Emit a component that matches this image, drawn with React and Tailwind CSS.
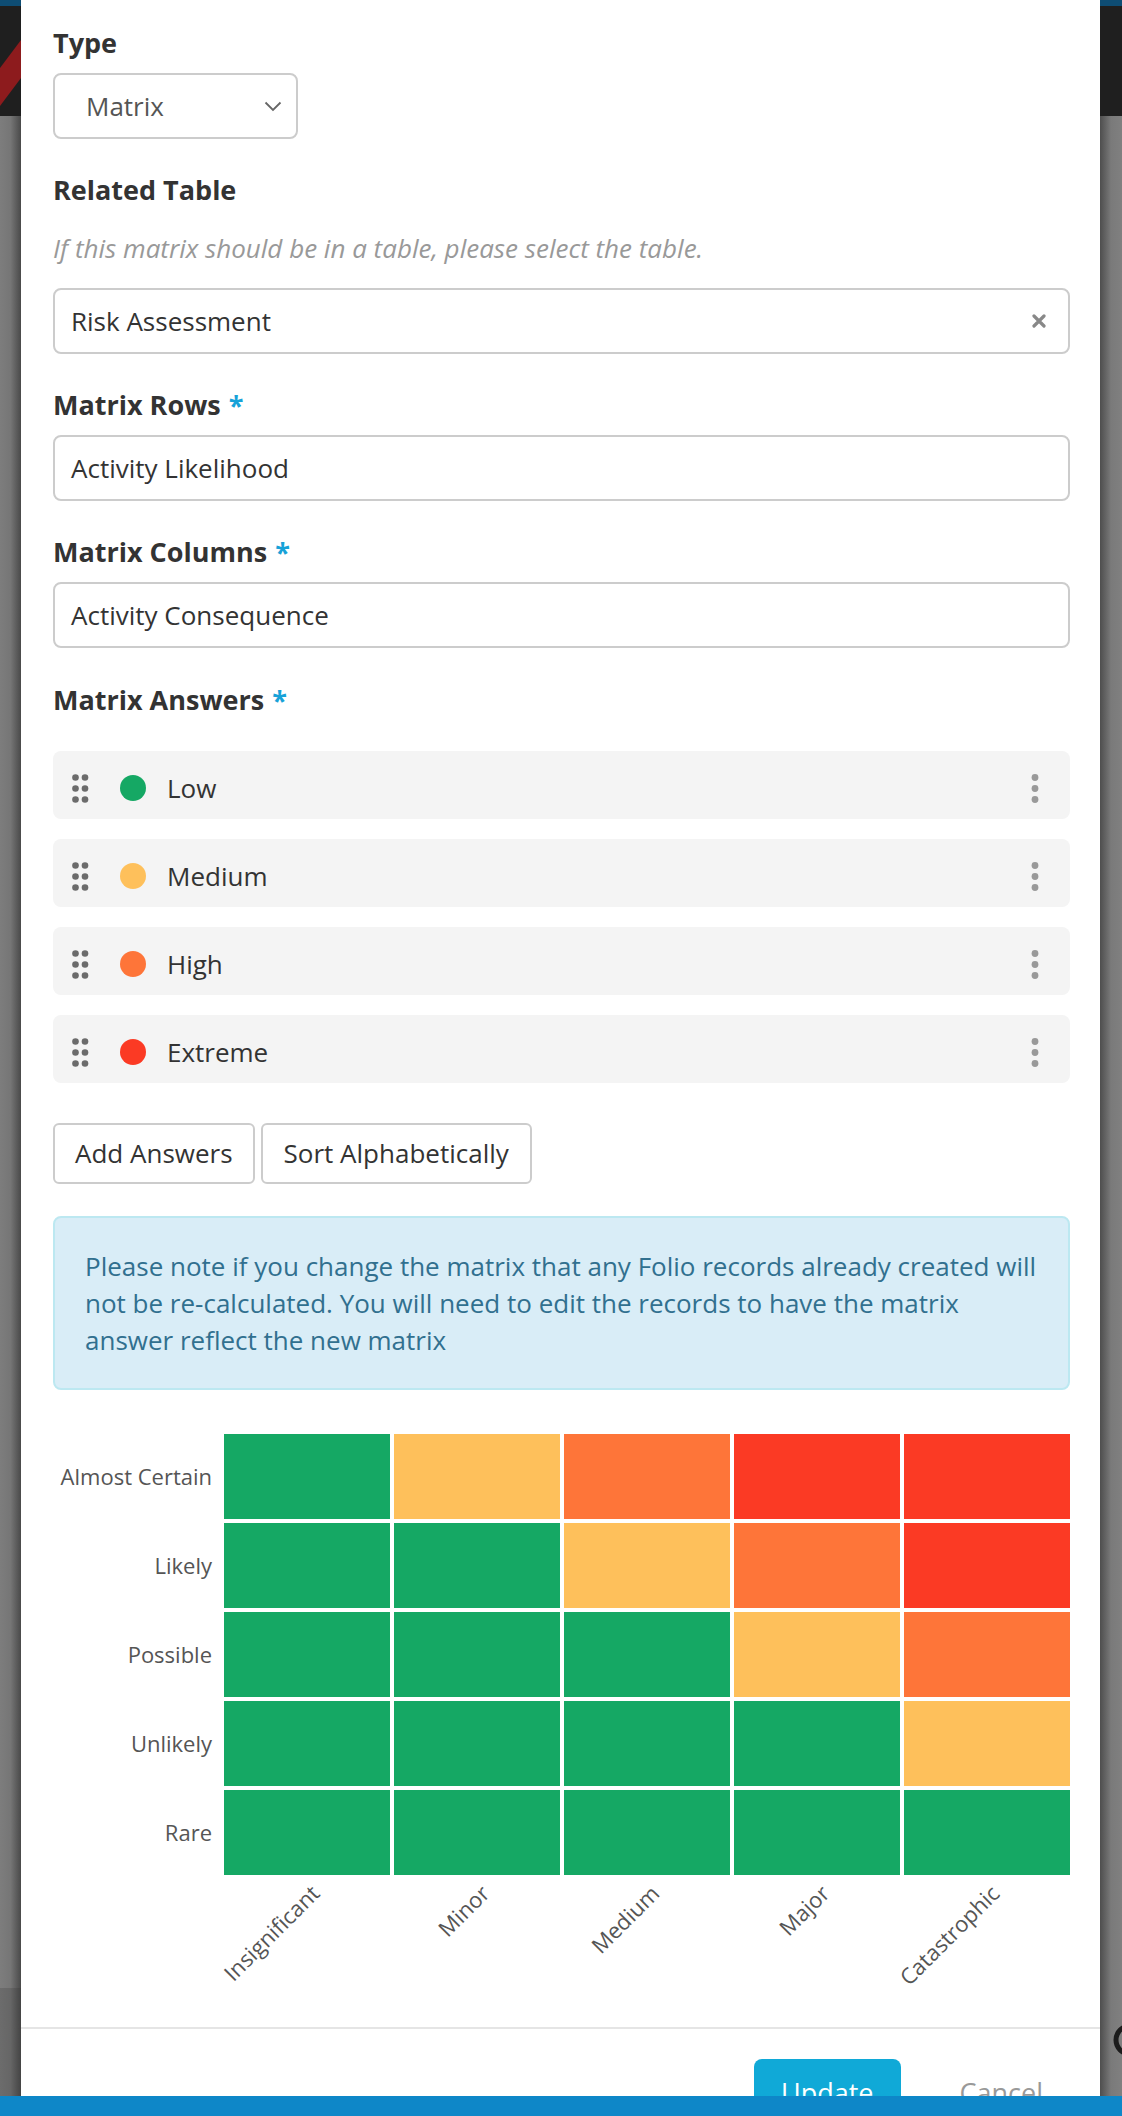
const GREEN = 'bg-[#15a864]';
const YELLOW = 'bg-[#fec05b]';
const ORANGE = 'bg-[#fe7539]';
const RED = 'bg-[#fb3a24]';

const answers = [
    { label: 'Low', color: GREEN },
    { label: 'Medium', color: YELLOW },
    { label: 'High', color: ORANGE },
    { label: 'Extreme', color: RED },
];

const rows = ['Almost Certain', 'Likely', 'Possible', 'Unlikely', 'Rare'];
const columns = ['Insignificant', 'Minor', 'Medium', 'Major', 'Catastrophic'];

const matrix = [
    [GREEN, YELLOW, ORANGE, RED, RED],
    [GREEN, GREEN, YELLOW, ORANGE, RED],
    [GREEN, GREEN, GREEN, YELLOW, ORANGE],
    [GREEN, GREEN, GREEN, GREEN, YELLOW],
    [GREEN, GREEN, GREEN, GREEN, GREEN],
];

const Label = ({ children, required }) => (
    <div className="text-[27px] leading-[38px] font-bold text-[#333]">
        {children}
        {required && <span className="text-[#17a2d8] ml-[8px]">*</span>}
    </div>
);

const TextInput = ({ value, clearable }) => (
    <div className="h-[66px] border-2 border-[#cccccc] rounded-[8px] flex items-center pl-[16px] pr-[22px] text-[26px] text-[#333]">
        <span className="flex-1">{value}</span>
        {clearable && (
            <svg width="14" height="14" viewBox="0 0 14 14">
                <path d="M2 2 L12 12 M12 2 L2 12" stroke="#888" strokeWidth="3.2" strokeLinecap="round" />
            </svg>
        )}
    </div>
);

const DragHandle = () => (
    <svg width="17" height="29" viewBox="0 0 17 29">
        {[3.5, 14.5, 25.5].map(y =>
            [3.5, 13].map(x => <circle key={`${x}-${y}`} cx={x} cy={y} r="3.3" fill="#6b6b6b" />)
        )}
    </svg>
);

const Kebab = () => (
    <svg width="8" height="29" viewBox="0 0 8 29">
        {[3.5, 14.5, 25.5].map(y => <circle key={y} cx="4" cy={y} r="3.4" fill="#999" />)}
    </svg>
);

const Backdrop = ({ side }) => (
    <div className={`shrink-0 flex flex-col ${side === 'left' ? 'w-[21px]' : 'w-[22px]'}`}>
        <div className="h-[6px] bg-[#0e4d74]" />
        <div className="h-[110px] bg-[#1f1f1f] overflow-hidden">
            {side === 'left' && (
                <svg width="21" height="110" viewBox="0 0 21 110">
                    <polygon points="0,62 21,34 21,72 0,100" fill="#8d1b1d" />
                </svg>
            )}
        </div>
        <div
            className={`flex-1 ${
                side === 'left'
                    ? 'bg-gradient-to-r from-[#7d7d7d] via-[#767676] to-[#4a4a4a]'
                    : 'bg-gradient-to-r from-[#4e4e4e] via-[#7a7a7a] to-[#808080]'
            }`}
        />
        {side === 'right' && (
            <div className="h-[100px] bg-gradient-to-r from-[#4e4e4e] via-[#7a7a7a] to-[#808080] overflow-hidden">
                <svg width="22" height="100" viewBox="0 0 22 100">
                    <circle cx="30" cy="24" r="14" fill="none" stroke="#1c1c1c" strokeWidth="5" />
                </svg>
            </div>
        )}
        {side === 'left' && <div className="h-[128px] bg-gradient-to-r from-[#6c6c6c] via-[#666] to-[#444]" />}
    </div>
);

const App = () => {
    return (
        <div className="relative h-[2116px] w-[1122px] overflow-hidden flex font-['Open_Sans',sans-serif]">
            <Backdrop side="left" />

            <div className="w-[1079px] shrink-0 bg-white flex flex-col">
                <div className="pl-[32px] pr-[30px] pt-[24px] pb-[32px]">
                    <Label>Type</Label>
                    <div className="mt-[11px] w-[245px] h-[66px] border-2 border-[#cccccc] rounded-[8px] flex items-center pl-[31px] pr-[14px] text-[26px] text-[#555]">
                        <span className="flex-1">Matrix</span>
                        <svg width="18" height="11" viewBox="0 0 18 11">
                            <polyline points="1.5,1.5 9,9 16.5,1.5" fill="none" stroke="#666" strokeWidth="1.8" />
                        </svg>
                    </div>

                    <div className="mt-[32px]">
                        <Label>Related Table</Label>
                    </div>
                    <div className="mt-[22px] text-[26px] leading-[34px] italic text-[#999]">
                        If this matrix should be in a table, please select the table.
                    </div>
                    <div className="mt-[23px]">
                        <TextInput value="Risk Assessment" clearable />
                    </div>

                    <div className="mt-[32px]">
                        <Label required>Matrix Rows</Label>
                    </div>
                    <div className="mt-[11px]">
                        <TextInput value="Activity Likelihood" />
                    </div>

                    <div className="mt-[32px]">
                        <Label required>Matrix Columns</Label>
                    </div>
                    <div className="mt-[11px]">
                        <TextInput value="Activity Consequence" />
                    </div>

                    <div className="mt-[33px]">
                        <Label required>Matrix Answers</Label>
                    </div>
                    <div className="mt-[32px] flex flex-col gap-[20px]">
                        {answers.map(a => (
                            <div key={a.label} className="h-[68px] bg-[#f4f4f4] rounded-[8px] flex items-center pl-[19px] pr-[31px] pt-[6px]">
                                <DragHandle />
                                <span className={`ml-[31px] w-[26px] h-[26px] rounded-full ${a.color}`} />
                                <span className="ml-[21px] flex-1 text-[26px] text-[#333]">{a.label}</span>
                                <Kebab />
                            </div>
                        ))}
                    </div>

                    <div className="mt-[40px] flex gap-[6px]">
                        <button className="h-[61px] px-[20px] border-2 border-[#cccccc] rounded-[6px] bg-white text-[26px] text-[#333]">
                            Add Answers
                        </button>
                        <button className="h-[61px] px-[21px] border-2 border-[#cccccc] rounded-[6px] bg-white text-[26px] text-[#333]">
                            Sort Alphabetically
                        </button>
                    </div>

                    <div className="mt-[32px] border-2 border-[#bce8f1] bg-[#d9edf7] rounded-[8px] pl-[30px] pr-[20px] pt-[30px] pb-[29px] text-[26px] leading-[37px] text-[#31708f] whitespace-nowrap">
                        Please note if you change the matrix that any Folio records already created will
                        <br />
                        not be re-calculated. You will need to edit the records to have the matrix
                        <br />
                        answer reflect the new matrix
                    </div>

                    <div className="mt-[44px] flex">
                        <div className="w-[171px] shrink-0 pr-[12px] flex flex-col gap-[4px]">
                            {rows.map(r => (
                                <div key={r} className="h-[85px] flex items-center justify-end whitespace-nowrap text-[22px] text-[#555]">
                                    {r}
                                </div>
                            ))}
                        </div>
                        <div className="flex-1 grid grid-cols-5 gap-[4px]">
                            {matrix.flatMap((row, i) =>
                                row.map((c, j) => <div key={`${i}-${j}`} className={`h-[85px] ${c}`} />)
                            )}
                        </div>
                    </div>
                    <svg width="846" height="120" className="ml-[171px] block overflow-visible">
                        {columns.map((c, i) => {
                            const x = i * 170 + 83 + 14;
                            const y = 20;
                            return (
                                <text
                                    key={c}
                                    x={x}
                                    y={y}
                                    textAnchor="end"
                                    transform={`rotate(-45 ${x} ${y})`}
                                    fontFamily="'Open Sans', sans-serif"
                                    fontSize="22"
                                    fill="#555"
                                >
                                    {c}
                                </text>
                            );
                        })}
                    </svg>
                </div>

                <div className="border-t-2 border-[#e5e5e5] pt-[30px] pr-[30px] flex justify-end gap-[32px]">
                    <button className="h-[68px] px-[27px] rounded-[8px] bg-[#10a9d7] text-white text-[27px]">Update</button>
                    <button className="h-[68px] px-[27px] text-[#999] text-[27px]">Cancel</button>
                </div>
            </div>

            <Backdrop side="right" />

            <div className="absolute left-0 right-0 bottom-0 h-[20px] bg-[#0e87c8]" />
        </div>
    );
};

export default App;
